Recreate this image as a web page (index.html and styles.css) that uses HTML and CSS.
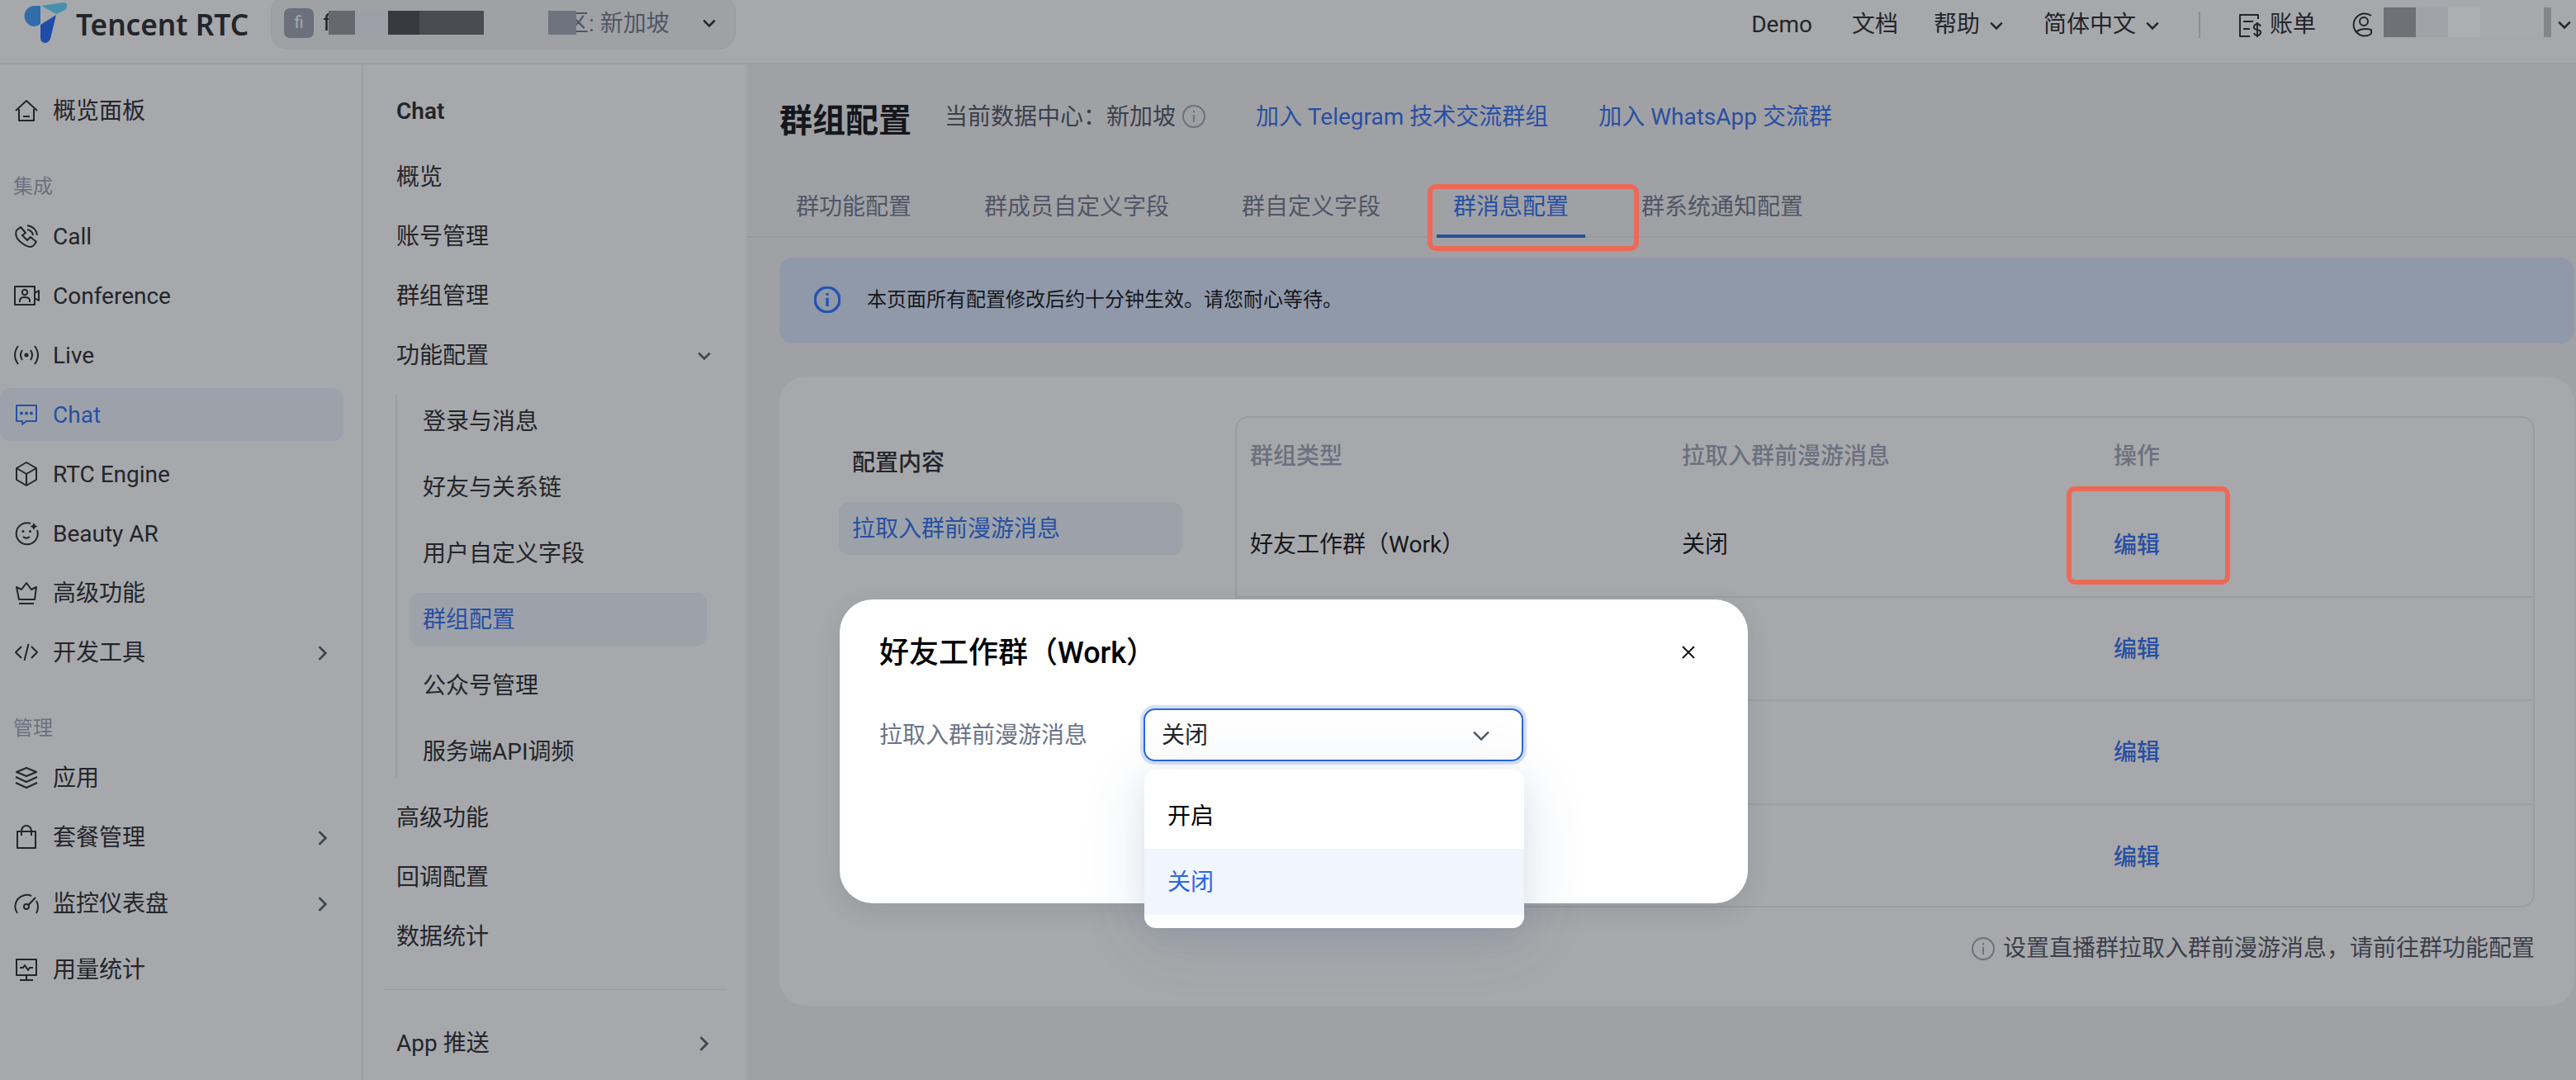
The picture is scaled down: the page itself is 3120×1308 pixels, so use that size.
FILE: index.html
```html
<!DOCTYPE html>
<html lang="zh-CN">
<head>
  <meta charset="UTF-8">
  <title>群组配置 - Tencent RTC</title>
  <link rel="stylesheet" href="styles.css">
</head>
<body>
  <svg class="sprite">
    <symbol id="down" viewBox="0 0 16 16"><path d="M2 5l6 6 6-6"/></symbol>
    <symbol id="right" viewBox="0 0 16 16"><path d="M4 1l7 7-7 7"/></symbol>
    <symbol id="info" viewBox="0 0 28 28"><circle cx="14" cy="14" r="13"/><path d="M14 12v9M14 7v2.5"/></symbol>
  </svg>

  <header class="header">
    <div class="logo">
      <svg width="54" height="52" viewBox="0 0 54 52">
        <path d="M20 4H13A12.4 12.4 0 0 0 13 29Q16 29 20 26z" fill="#316dad"/>
        <path d="M21 4L48 0Q53 0 52 5Q52 8 48 10L39 14z" fill="#4690ad"/>
        <path d="M20 27L39 15L32 44Q30 49 25 49Q20 48 20 43z" fill="#204ca8"/>
      </svg>
      <span>Tencent RTC</span>
    </div>
    <div class="app-select">
      <span class="badge">fi</span>
      <span class="app-name">f</span>
      <div class="mosaic mosaic-app"><i></i><i></i><i></i><i></i><i></i><i></i><i></i></div>
      <span class="region">区: 新加坡</span>
      <svg class="chev"><use href="#down"/></svg>
    </div>
    <nav class="top-nav">
      <a>Demo</a>
      <a class="docs">文档</a>
      <a class="help">帮助 <svg class="chev"><use href="#down"/></svg></a>
      <a class="lang">简体中文 <svg class="chev"><use href="#down"/></svg></a>
      <span class="sep"></span>
      <a class="bill">
        <svg class="icon" viewBox="0 0 32 32"><path d="M27 9V4H5v26h12M9 12h12M9 21h8"/><path d="M30 18q-1-3-4-3t-4 3 4 4 4 4-4 3-4-3M26 13v18"/></svg>账单
      </a>
      <svg class="icon user" viewBox="0 0 32 32"><path d="M27 5A13.500 13.500 0 1 0 27 27M8 25q8-6 19-3v5"/><circle cx="18" cy="12" r="5"/></svg>
      <div class="mosaic mosaic-user"><i></i><i></i><i></i><i></i><i></i></div>
      <svg class="chev"><use href="#down"/></svg>
    </nav>
  </header>

  <div class="layout">
    <aside class="side">
      <a class="item"><svg class="icon" viewBox="0 0 32 32"><path d="M3 16L16 4l13 12M7 14v14h18V14M12 23h8"/></svg>概览面板</a>
      <div class="group">集成</div>
      <a class="item"><svg class="icon" viewBox="0 0 32 32"><path d="M9 5L4 9q-3 8 6 15t14 4l4-5-7-6-4 4-6-6 4-3zM17 3q11 2 12 12M17 8q6 1 7 7"/></svg>Call</a>
      <a class="item"><svg class="icon" viewBox="0 0 32 32"><path d="M2 5h24v22H2zM26 13l5-3v12l-5-3M8 24v-2q0-4 6-4t6 4v2"/><circle cx="14" cy="12" r="3.200"/></svg>Conference</a>
      <a class="item"><svg class="icon" viewBox="0 0 32 32"><path d="M6 5q-8 11 0 22M26 5q8 11 0 22M11 10q-4 6 0 12M21 10q4 6 0 12"/><circle class="dot" cx="16" cy="16" r="2.500"/></svg>Live</a>
      <a class="item active"><svg class="icon" viewBox="0 0 32 32"><path d="M4 5h24v19H16l-5 4v-4H4z"/><circle class="dot" cx="10" cy="14.500" r="2"/><circle class="dot" cx="16" cy="14.500" r="2"/><circle class="dot" cx="22" cy="14.500" r="2"/></svg>Chat</a>
      <a class="item"><svg class="icon" viewBox="0 0 32 32"><path d="M16 2l12 7v14l-12 7-12-7V9zM4 9l12 7 12-7M16 16v14"/></svg>RTC Engine</a>
      <a class="item"><svg class="icon" viewBox="0 0 32 32"><path d="M21 4A13 13 0 1 0 29 12M12 20q4 3.500 8 0"/><circle class="dot" cx="12" cy="13.500" r="1.500"/><circle class="dot" cx="20.500" cy="13.500" r="1.500"/><path class="dot" d="M25 3l1.500 3 3 1.500-3 1.500-1.500 3-1.500-3-3-1.500 3-1.500z"/></svg>Beauty AR</a>
      <a class="item"><svg class="icon" viewBox="0 0 32 32"><path d="M4 9l6 3 6-8 6 8 6-3-2 15H7zM7 29h18"/></svg>高级功能</a>
      <a class="item"><svg class="icon" viewBox="0 0 32 32"><path d="M10 9l-7 7 7 7M22 9l7 7-7 7M18.500 6l-5 20"/></svg>开发工具<svg class="chev more"><use href="#right"/></svg></a>
      <div class="group">管理</div>
      <a class="item"><svg class="icon" viewBox="0 0 32 32"><path d="M16 4l12 5-12 5L4 9zM3 15l13 6 13-6M3 22l13 6 13-6"/></svg>应用</a>
      <a class="item"><svg class="icon" viewBox="0 0 32 32"><path d="M5 9h22v20H5zM10 14V8q1-6 6-6t6 6v6"/></svg>套餐管理<svg class="chev more"><use href="#right"/></svg></a>
      <a class="item wide"><svg class="icon" viewBox="0 0 32 32"><path d="M5 28A14 14 0 0 1 22 7M28 13q4 7 0 15M18.500 18L27 9"/><circle cx="16" cy="20" r="3"/></svg>监控仪表盘<svg class="chev more"><use href="#right"/></svg></a>
      <a class="item wide"><svg class="icon" viewBox="0 0 32 32"><path d="M4 4h24v19H4zM16 23v5M8 29h16M8 14h4l2-3 4 6 2-3h4"/></svg>用量统计</a>
    </aside>

    <aside class="side sub-side">
      <a class="item title">Chat</a>
      <a class="item wide">概览</a>
      <a class="item">账号管理</a>
      <a class="item">群组管理</a>
      <a class="item">功能配置<svg class="chev more"><use href="#down"/></svg></a>
      <div class="tree">
        <a class="item">登录与消息</a>
        <a class="item">好友与关系链</a>
        <a class="item">用户自定义字段</a>
        <a class="item active">群组配置</a>
        <a class="item">公众号管理</a>
        <a class="item">服务端API调频</a>
      </div>
      <a class="item">高级功能</a>
      <a class="item">回调配置</a>
      <a class="item">数据统计</a>
      <hr>
      <a class="item">App 推送<svg class="chev more"><use href="#right"/></svg></a>
    </aside>

    <main class="main">
      <div class="page-head">
        <h1>群组配置</h1>
        <span class="center-info">当前数据中心：新加坡</span>
        <svg class="info"><use href="#info"/></svg>
        <a class="link">加入 Telegram 技术交流群组</a>
        <a class="link">加入 WhatsApp 交流群</a>
      </div>
      <div class="tabs">
        <a class="tab">群功能配置</a>
        <a class="tab">群成员自定义字段</a>
        <a class="tab">群自定义字段</a>
        <a class="tab current">群消息配置<span class="mark"></span></a>
        <a class="tab">群系统通知配置</a>
      </div>
      <div class="alert"><svg class="info"><use href="#info"/></svg>本页面所有配置修改后约十分钟生效。请您耐心等待。</div>
      <section class="card">
        <div class="card-body">
          <div class="menu">
            <h2>配置内容</h2>
            <a class="menu-item">拉取入群前漫游消息</a>
          </div>
          <div class="table">
            <div class="row head"><span>群组类型</span><span>拉取入群前漫游消息</span><span>操作</span></div>
            <div class="row"><span>好友工作群（Work）</span><span>关闭</span><a class="edit">编辑<span class="mark"></span></a></div>
            <div class="row"><span></span><span></span><a class="edit">编辑</a></div>
            <div class="row"><span></span><span></span><a class="edit">编辑</a></div>
            <div class="row"><span></span><span></span><a class="edit">编辑</a></div>
          </div>
        </div>
        <p class="tip"><svg class="info"><use href="#info"/></svg>设置直播群拉取入群前漫游消息，请前往群功能配置</p>
      </section>
    </main>
  </div>

  <div class="modal">
    <div class="modal-head">
      <h3>好友工作群（Work）</h3>
      <svg class="close" viewBox="0 0 16 16"><path d="M1 1l14 14M15 1L1 15"/></svg>
    </div>
    <div class="field">
      <label>拉取入群前漫游消息</label>
      <div class="select">
        <span>关闭</span><svg class="chev"><use href="#down"/></svg>
        <div class="options">
          <div class="option">开启</div>
          <div class="option selected">关闭</div>
        </div>
      </div>
    </div>
  </div>
</body>
</html>
```
FILE: styles.css
```css
* { box-sizing: border-box; }
body { margin: 0; height: 1308px; overflow: hidden; position: relative; background: #a0a1a5; color: #23252b; font: 28px/40px Roboto, "Noto Sans CJK SC", sans-serif; }
h1, h2, h3, p { margin: 0; }
svg { fill: none; stroke: currentColor; stroke-width: 2; flex-shrink: 0; }
.sprite { display: none; }
.icon { width: 32px; height: 32px; stroke-linejoin: round; }
.dot { fill: currentColor; stroke: none; }
.chev { width: 18px; height: 18px; stroke-width: 2.2; }
.info { width: 28px; height: 28px; }

/* header */
.header { display: flex; align-items: center; height: 78px; padding: 0 5px 18px 29px; background: #a7a8ab; border-bottom: 2px solid #9c9da6; }
.logo { display: flex; align-items: center; width: 299px; font: 600 35.2px/50px "Noto Sans", sans-serif; white-space: nowrap; }
.logo svg { stroke: none; margin-right: 9px; }
.app-select { display: flex; align-items: center; width: 563px; height: 66px; margin-top: -5px; padding: 2px 22px 0 15px; background: #a0a1a5; border: 1px solid #9a9ba0; border-radius: 20px; }
.badge { width: 36px; height: 36px; border-radius: 7px; background: #6b717a; color: #a7a8ab; font-size: 20px; line-height: 34px; text-align: center; }
.app-name { width: 7px; margin-left: 11px; }
.mosaic { display: flex; position: relative; z-index: 1; }
.mosaic-app { height: 29px; }
.mosaic-app i { width: 39px; background: #4b4b54; }
.mosaic-app i:nth-child(1) { width: 32px; background: #67676f; }
.mosaic-app i:nth-child(2) { width: 40px; background: #9f9faa; }
.mosaic-app i:nth-child(3) { width: 38px; background: #393942; }
.mosaic-app i:nth-child(6) { width: 78px; background: #a0a1a4; }
.mosaic-app i:nth-child(7) { width: 34px; background: #6e747d; }
.region { margin: 2px 0 0 -13px; color: #515665; }
.app-select .chev { margin-left: auto; }
.top-nav { display: flex; align-items: center; margin-left: auto; height: 58px; padding-top: 1px; }
.top-nav a { display: flex; align-items: center; }
.top-nav a .chev { margin: 2px 0 0 11px; }
.docs { margin-left: 48px; }
.help { margin-left: 43px; }
.lang { margin-left: 48px; }
.sep { width: 2px; height: 32px; margin-left: 47px; background: #8d8e93; }
.bill { margin-left: 43px; }
.bill .icon { margin-right: 9px; }
.user { margin-left: 40px; }
.mosaic-user { width: 203px; height: 36px; margin: 0 7px 6px 10px; }
.mosaic-user i { width: 39px; background: #707176; }
.mosaic-user i:nth-child(2) { background: #a1a2a7; }
.mosaic-user i:nth-child(3) { background: #adaeb2; }
.mosaic-user i:nth-child(4) { width: 77px; background: #a8a9ac; }
.mosaic-user i:nth-child(5) { width: 9px; background: #85868a; }

/* side menus */
.layout { display: flex; height: 1230px; }
.side { width: 440px; padding: 24px 22px 0 0; background: #a7a8ab; border-right: 2px solid #9c9da6; }
.item { display: flex; align-items: center; height: 64px; margin-bottom: 8px; padding: 2px 0 0 15px; border: 1px solid transparent; border-radius: 12px; }
.item .icon { margin: -2px 16px 0 0; }
.item.wide { margin-top: 16px; }
.item.active { background: #9da2aa; border-color: #98a1b0; color: #2850a2; }
.more { margin-left: auto; margin-right: 15px; color: #3c4352; stroke-width: 2.4; }
.group { margin: 40px 0 8px; padding-left: 16px; color: #6b7180; font-size: 24px; }
.sub-side { width: 464px; padding: 24px 24px 0; border-right: 0; }
.sub-side .more { margin-right: 17px; }
.title { font-weight: 600; }
.tree { margin: 16px 0 16px 15px; padding-left: 15px; border-left: 2px solid #9c9da1; }
.tree .item { width: 360px; margin: 0 0 16px; }
.tree .item:last-child { margin-bottom: 0; }
.sub-side hr { margin: 32px 0; border: 0; border-top: 1px solid #999a9f; }

/* content */
.main { flex: 1; padding-left: 40px; }
.page-head { display: flex; height: 134px; padding-top: 44px; }
h1 { width: 200px; color: #15171c; font-size: 40px; line-height: 50px; }
.center-info { color: #3c404b; }
.page-head .info { margin: 5px 0 0 8px; color: #6c7180; }
.link { color: #2850a2; margin-left: 61px; }
.tabs { display: flex; gap: 48px; height: 76px; margin-left: -40px; padding-left: 40px; border-bottom: 2px solid #999a9f; }
.tab { position: relative; height: 76px; padding: 19px 20px; color: #515665; }
.tab.current { color: #2850a2; border-bottom: 4px solid #284f9e; }
.mark { position: absolute; border: 6px solid #ed6956; border-radius: 10px; }
.tab .mark { left: -11px; top: 11px; width: 256px; height: 81px; }
.alert { display: flex; align-items: center; width: 2174px; height: 104px; margin: 24px 0 40px; padding: 0 0 3px 42px; border-radius: 16px; background: #9099aa; color: #15171c; font-size: 24px; }
.alert .info { width: 32px; height: 32px; margin-right: 32px; color: #2553ad; stroke-width: 3; }
.card { width: 2174px; height: 762px; padding: 48px 48px 0 72px; border-radius: 32px; background: #a7a8ab; }
.card-body { display: flex; justify-content: space-between; }
.menu { width: 416px; padding-top: 37px; }
.menu h2 { padding-left: 16px; font-size: 28px; font-weight: 500; line-height: 40px; }
.menu-item { display: flex; align-items: center; height: 64px; margin-top: 27px; padding: 2px 0 0 15px; border: 1px solid #98a1a9; border-radius: 12px; background: #9da2aa; color: #2850a2; }
.table { width: 1574px; height: 595px; border: 2px solid #999ca4; border-radius: 16px; }
.row { display: grid; grid-template-columns: repeat(3, 523px); align-items: center; height: 125.5px; padding: 1px 0 0 16px; border-bottom: 2px solid #9c9da3; color: #15171c; }
.row:last-child { border-bottom: 0; }
.head { height: 92px; border-bottom: 0; color: #6b7180; font-weight: 500; }
.edit { position: relative; padding-top: 2px; color: #2850a2; font-weight: 500; }
.edit .mark { left: -57px; top: -50px; width: 198px; height: 119px; }
.tip { display: flex; align-items: center; justify-content: flex-end; margin-top: 30px; color: #3c404b; }
.tip .info { margin-right: 10px; color: #6b7180; }

/* dialog */
.modal { position: absolute; left: 1017px; top: 726px; width: 1100px; height: 368px; padding: 40px 48px; border-radius: 40px; background: #fff; box-shadow: 0 8px 30px rgba(40, 50, 75, 0.12); }
.modal-head { display: flex; align-items: center; justify-content: space-between; }
h3 { color: #000; font-size: 36px; font-weight: 500; line-height: 50px; }
.close { width: 16px; height: 16px; margin: -2px 16px 0 0; color: #15171c; }
.field { display: flex; align-items: center; margin-top: 42px; color: #6b7488; }
.field label { width: 320px; padding-top: 1px; }
.select { position: relative; display: flex; align-items: center; justify-content: space-between; width: 460px; height: 64px; padding: 1px 37px 0 20px; border: 2px solid #2b66de; border-radius: 14px; background: #fff; color: #23252b; box-shadow: 0 0 0 4px #d6dff7; }
.select .chev { width: 24px; height: 24px; margin-top: 0; stroke-width: 1.6; color: #4a5160; }
.options { position: absolute; left: -1px; top: 72px; width: 460px; height: 192px; padding: 16px 0; border-radius: 14px; background: #fff; box-shadow: 0 12px 80px rgba(54, 88, 140, 0.14), 0 12px 30px rgba(54, 88, 140, 0.08); }
.option { height: 80px; padding-left: 28px; color: #000; line-height: 81px; }
.option.selected { background: #f0f5fe; color: #2b66de; }
```
